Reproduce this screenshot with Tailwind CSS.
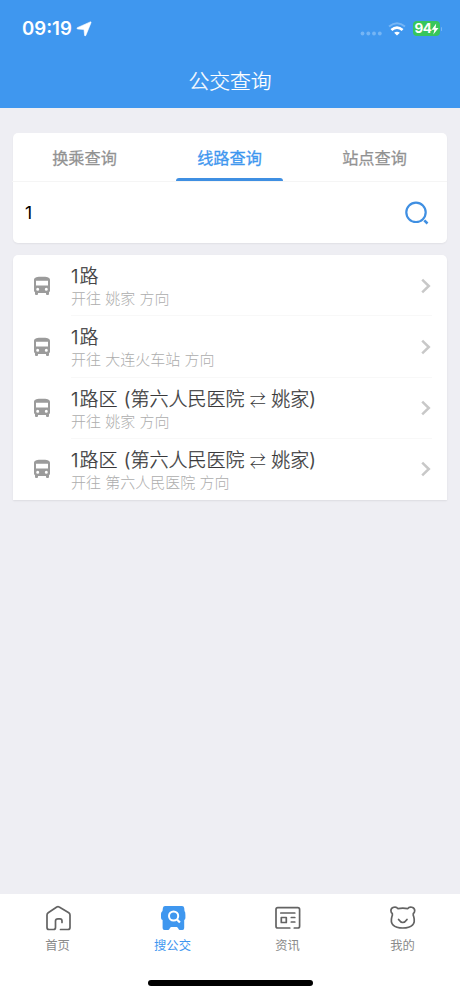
<!DOCTYPE html>
<html lang="zh-CN">
<head>
<meta charset="utf-8">
<title>公交查询</title>
<script src="https://cdn.jsdelivr.net/npm/@tailwindcss/browser@4"></script>
</head>
<body class="w-[460px] h-[996px] overflow-hidden bg-[#eeeef3] flex flex-col font-['Inter','Noto_Sans_CJK_SC',sans-serif]">
<svg class="hidden">
  <symbol id="bus" viewBox="0 0 18 20"><path fill="#9b9b9b" fill-rule="evenodd" d="M1 4C1 1.200 4.500 .7 9 .7S17 1.200 17 4V14.500Q17 15.600 16 16.300V18Q16 19 15 19H14Q13 19 13 18V17H5V18Q5 19 4 19H3Q2 19 2 18V16.300Q1 15.600 1 14.500ZM3 4.800V9.600H15V4.800ZM4.700 11.700A1.500 1.500 0 1 0 4.700 14.700A1.500 1.500 0 1 0 4.700 11.700ZM13.300 11.700A1.500 1.500 0 1 0 13.300 14.700A1.500 1.500 0 1 0 13.300 11.700Z"/></symbol>
  <symbol id="chev" viewBox="0 0 12 16"><path d="M2.200 1.700L8.800 8L2.200 14.300" fill="none" stroke="#c8c8c8" stroke-width="2.500"/></symbol>
</svg>
<header class="h-[108px] shrink-0 bg-[#3f97ef] text-white">
  <div class="h-[57px] pl-[22px] pr-[18px] flex items-center">
    <span class="text-[18.600px] font-semibold w-[50px] whitespace-nowrap">09:19</span>
    <svg class="ml-[4px] w-4 h-4" viewBox="0 0 16 16"><path d="M14.300 .9Q15.400 .6 15 1.700L9.800 14.500Q9.200 15.600 8.600 14.400L8 8.500L1.800 8Q.2 7.500 1.300 6.700Z" fill="white" stroke="white" stroke-width=".6" stroke-linejoin="round"/></svg>
    <div class="ml-auto flex items-center">
      <svg class="w-[22px] h-4 mt-1" viewBox="0 0 22 16"><g fill="#75b5f5"><circle cx="2.500" cy="10.500" r="1.900"/><circle cx="8.300" cy="10.500" r="1.900"/><circle cx="14" cy="10.500" r="1.900"/><circle cx="19.800" cy="10.500" r="1.900"/></g></svg>
      <svg class="ml-1.5 w-[18px] h-[14px]" viewBox="0 0 18 14"><path d="M1 4.500Q9-2 17 4.500" stroke="#75b5f5" stroke-width="2" fill="none"/><path d="M3.400 8Q9 3.200 14.600 8" stroke="white" stroke-width="2.700" fill="none"/><path d="M6.100 10.700Q9 8.600 11.900 10.700L9 13.600Z" fill="white"/></svg>
      <div class="ml-[7px] w-[27px] h-[15px] rounded-[4px] bg-[#37c65b] flex items-center pl-[2px]">
        <span class="text-[13.500px] leading-none font-bold tracking-[-0.5px]">94</span>
        <svg class="w-2 h-3" viewBox="0 0 8 12"><path d="M5.200 .5L.6 6.700H3.400L2.300 11.500L7.500 5H4.600Z" fill="white"/></svg>
      </div>
      <span class="ml-[1px] w-[1.500px] h-1 rounded bg-[#75b5f5]"></span>
    </div>
  </div>
  <h1 class="h-[50px] flex items-center justify-center text-[20.800px] font-light [-webkit-text-stroke:0.250px]">公交查询</h1>
</header>
<main class="flex-1 px-[13px] pt-[25px]">
  <section class="h-[110px] bg-white rounded-[5px] shadow-[0_1px_2px_rgba(0,0,0,0.06)]">
    <nav class="h-[49px] -ml-px grid grid-cols-3 border-b border-[#f5f5f5] text-[16.200px] text-[#929292] [-webkit-text-stroke:0.250px]">
      <span class="flex items-center justify-center pt-0.5">换乘查询</span>
      <span class="relative flex items-center justify-center pt-0.5 text-[#3f97ef] [-webkit-text-stroke:0.300px]">线路查询<i class="absolute bottom-0 h-[3.500px] w-[107px] bg-[#3f8fe2] rounded-t-[3px]"></i></span>
      <span class="flex items-center justify-center pt-0.5">站点查询</span>
    </nav>
    <div class="h-[61px] flex items-center justify-between pl-3 pr-[18px]">
      <span class="text-[17.500px] pt-0.5 text-black">1</span>
      <svg class="w-6 h-6" viewBox="0 0 24 24"><circle cx="11" cy="11.300" r="9.700" fill="none" stroke="#3f8fe2" stroke-width="2.200"/><path d="M19.300 19.400L22.500 22.500" stroke="#3f8fe2" stroke-width="2.600"/></svg>
    </div>
  </section>
  <ul class="mt-3 h-[245px] bg-white rounded-t-[5px] shadow-[0_1px_2px_rgba(0,0,0,0.08)] grid grid-rows-4">
    <li class="flex items-center pl-5 pr-[15px]">
      <svg class="w-[18px] h-5"><use href="#bus"/></svg>
      <div class="ml-5 flex-1 h-full pt-[10px] border-b border-[#f8f8f8]"><p class="text-[19px] leading-[24px] text-[#38383a] font-light [-webkit-text-stroke:0.250px]"><span class="tracking-[1px]">1</span>路</p><p class="text-[15px] leading-[20px] text-[#adadad] font-light">开往 姚家 方向</p></div>
      <svg class="w-3 h-4 -ml-3"><use href="#chev"/></svg>
    </li>
    <li class="flex items-center pl-5 pr-[15px]">
      <svg class="w-[18px] h-5"><use href="#bus"/></svg>
      <div class="ml-5 flex-1 h-full pt-[10px] border-b border-[#f8f8f8]"><p class="text-[19px] leading-[24px] text-[#38383a] font-light [-webkit-text-stroke:0.250px]"><span class="tracking-[1px]">1</span>路</p><p class="text-[15px] leading-[20px] text-[#adadad] font-light">开往 大连火车站 方向</p></div>
      <svg class="w-3 h-4 -ml-3"><use href="#chev"/></svg>
    </li>
    <li class="flex items-center pl-5 pr-[15px]">
      <svg class="w-[18px] h-5"><use href="#bus"/></svg>
      <div class="ml-5 flex-1 h-full pt-[10px] border-b border-[#f8f8f8]"><p class="text-[19px] leading-[24px] text-[#38383a] font-light [-webkit-text-stroke:0.250px] whitespace-nowrap"><span class="tracking-[1px]">1</span>路区 <span class="ml-px">(</span>第六人民医院 <span class="text-[16px] font-['Noto_Sans_CJK_SC'] leading-none [-webkit-text-stroke:0]">⇄</span> 姚家)</p><p class="text-[15px] leading-[20px] text-[#adadad] font-light">开往 姚家 方向</p></div>
      <svg class="w-3 h-4 -ml-3"><use href="#chev"/></svg>
    </li>
    <li class="flex items-center pl-5 pr-[15px]">
      <svg class="w-[18px] h-5"><use href="#bus"/></svg>
      <div class="ml-5 flex-1 h-full pt-[10px]"><p class="text-[19px] leading-[24px] text-[#38383a] font-light [-webkit-text-stroke:0.250px] whitespace-nowrap"><span class="tracking-[1px]">1</span>路区 <span class="ml-px">(</span>第六人民医院 <span class="text-[16px] font-['Noto_Sans_CJK_SC'] leading-none [-webkit-text-stroke:0]">⇄</span> 姚家)</p><p class="text-[15px] leading-[20px] text-[#adadad] font-light">开往 第六人民医院 方向</p></div>
      <svg class="w-3 h-4 -ml-3"><use href="#chev"/></svg>
    </li>
  </ul>
</main>
<footer class="h-[102px] shrink-0 bg-white flex flex-col items-center">
  <nav class="w-full h-[86px] grid grid-cols-4 pt-[10px] text-[12.300px] text-[#8a8a8a]">
    <div class="flex flex-col items-center"><svg class="w-7 h-7" viewBox="0 0 28 28" fill="none" stroke="#636363" stroke-width="1.700" stroke-linecap="round" stroke-linejoin="round"><path d="M18 18.500V17Q18 14.800 16 14.800H14Q11.500 14.800 11.500 17V23.500Q11.500 25.500 9.500 25.500H5Q3 25.500 3 23.500V11Q3 9.500 4.200 8.700L12.800 3Q14 2.200 15.200 3L24.800 8.700Q26 9.500 26 11V23.500Q26 25.500 24 25.500H16.500"/></svg><span class="mt-[4px] leading-5">首页</span></div>
    <div class="flex flex-col items-center text-[#3f97ef]"><svg class="w-7 h-7" viewBox="0 0 28 28"><path fill="#3f97ef" d="M6 2H23Q25 2 25.200 4L25.500 7Q26.500 8 26.400 11V14Q26.300 15.700 25.200 16V24Q25.200 26 23.500 26H21Q19.800 26 19.400 24.800T17.800 23H12.300Q11.100 23.200 10.700 24.600T9.300 26H5.500Q3.600 26 3.600 24V16Q1.900 15.500 2 13.500V10Q2 8 3.500 7L3.900 4Q4.200 2 6 2Z"/><circle cx="14.600" cy="12" r="4.600" fill="none" stroke="white" stroke-width="2"/><path d="M18 15.500L20.900 18.500" stroke="white" stroke-width="2.200"/></svg><span class="mt-[4px] leading-5">搜公交</span></div>
    <div class="flex flex-col items-center"><svg class="w-7 h-7" viewBox="0.700 0 28 28" fill="none" stroke="#636363" stroke-width="1.700" stroke-linecap="round" stroke-linejoin="round"><path d="M16.500 24H4.500Q2.700 24 2.700 22.200V5.500Q2.700 3.700 4.500 3.700H24.500Q26.300 3.700 26.300 5.500V22.200Q26.300 24 24.500 24H21M7.500 9H21.500M18 13.500H21.500M18 18H21.500M8 13.500H13V18.500H8Z"/></svg><span class="mt-[4px] leading-5">资讯</span></div>
    <div class="flex flex-col items-center"><svg class="w-7 h-7" viewBox="0.700 0 28 28" fill="none" stroke="#636363" stroke-width="1.700" stroke-linecap="round" stroke-linejoin="round"><path d="M9.500 4.600Q14.500 3.700 19.500 4.600C21 2 26.500 2.800 26.400 6.700Q26.300 8.700 25 9.500Q24.600 11 25.500 13C27.500 20 23.500 24 14.500 24S1.500 20 3.500 13Q4.400 11 4 9.500Q2.700 8.700 2.600 6.700C2.500 2.800 8 2 9.500 4.600ZM10.300 15.500Q14.500 21.500 18.700 15.500"/></svg><span class="mt-[4px] leading-5">我的</span></div>
  </nav>
  <div class="w-[165px] h-1.5 rounded-full bg-black"></div>
</footer>
</body>
</html>
